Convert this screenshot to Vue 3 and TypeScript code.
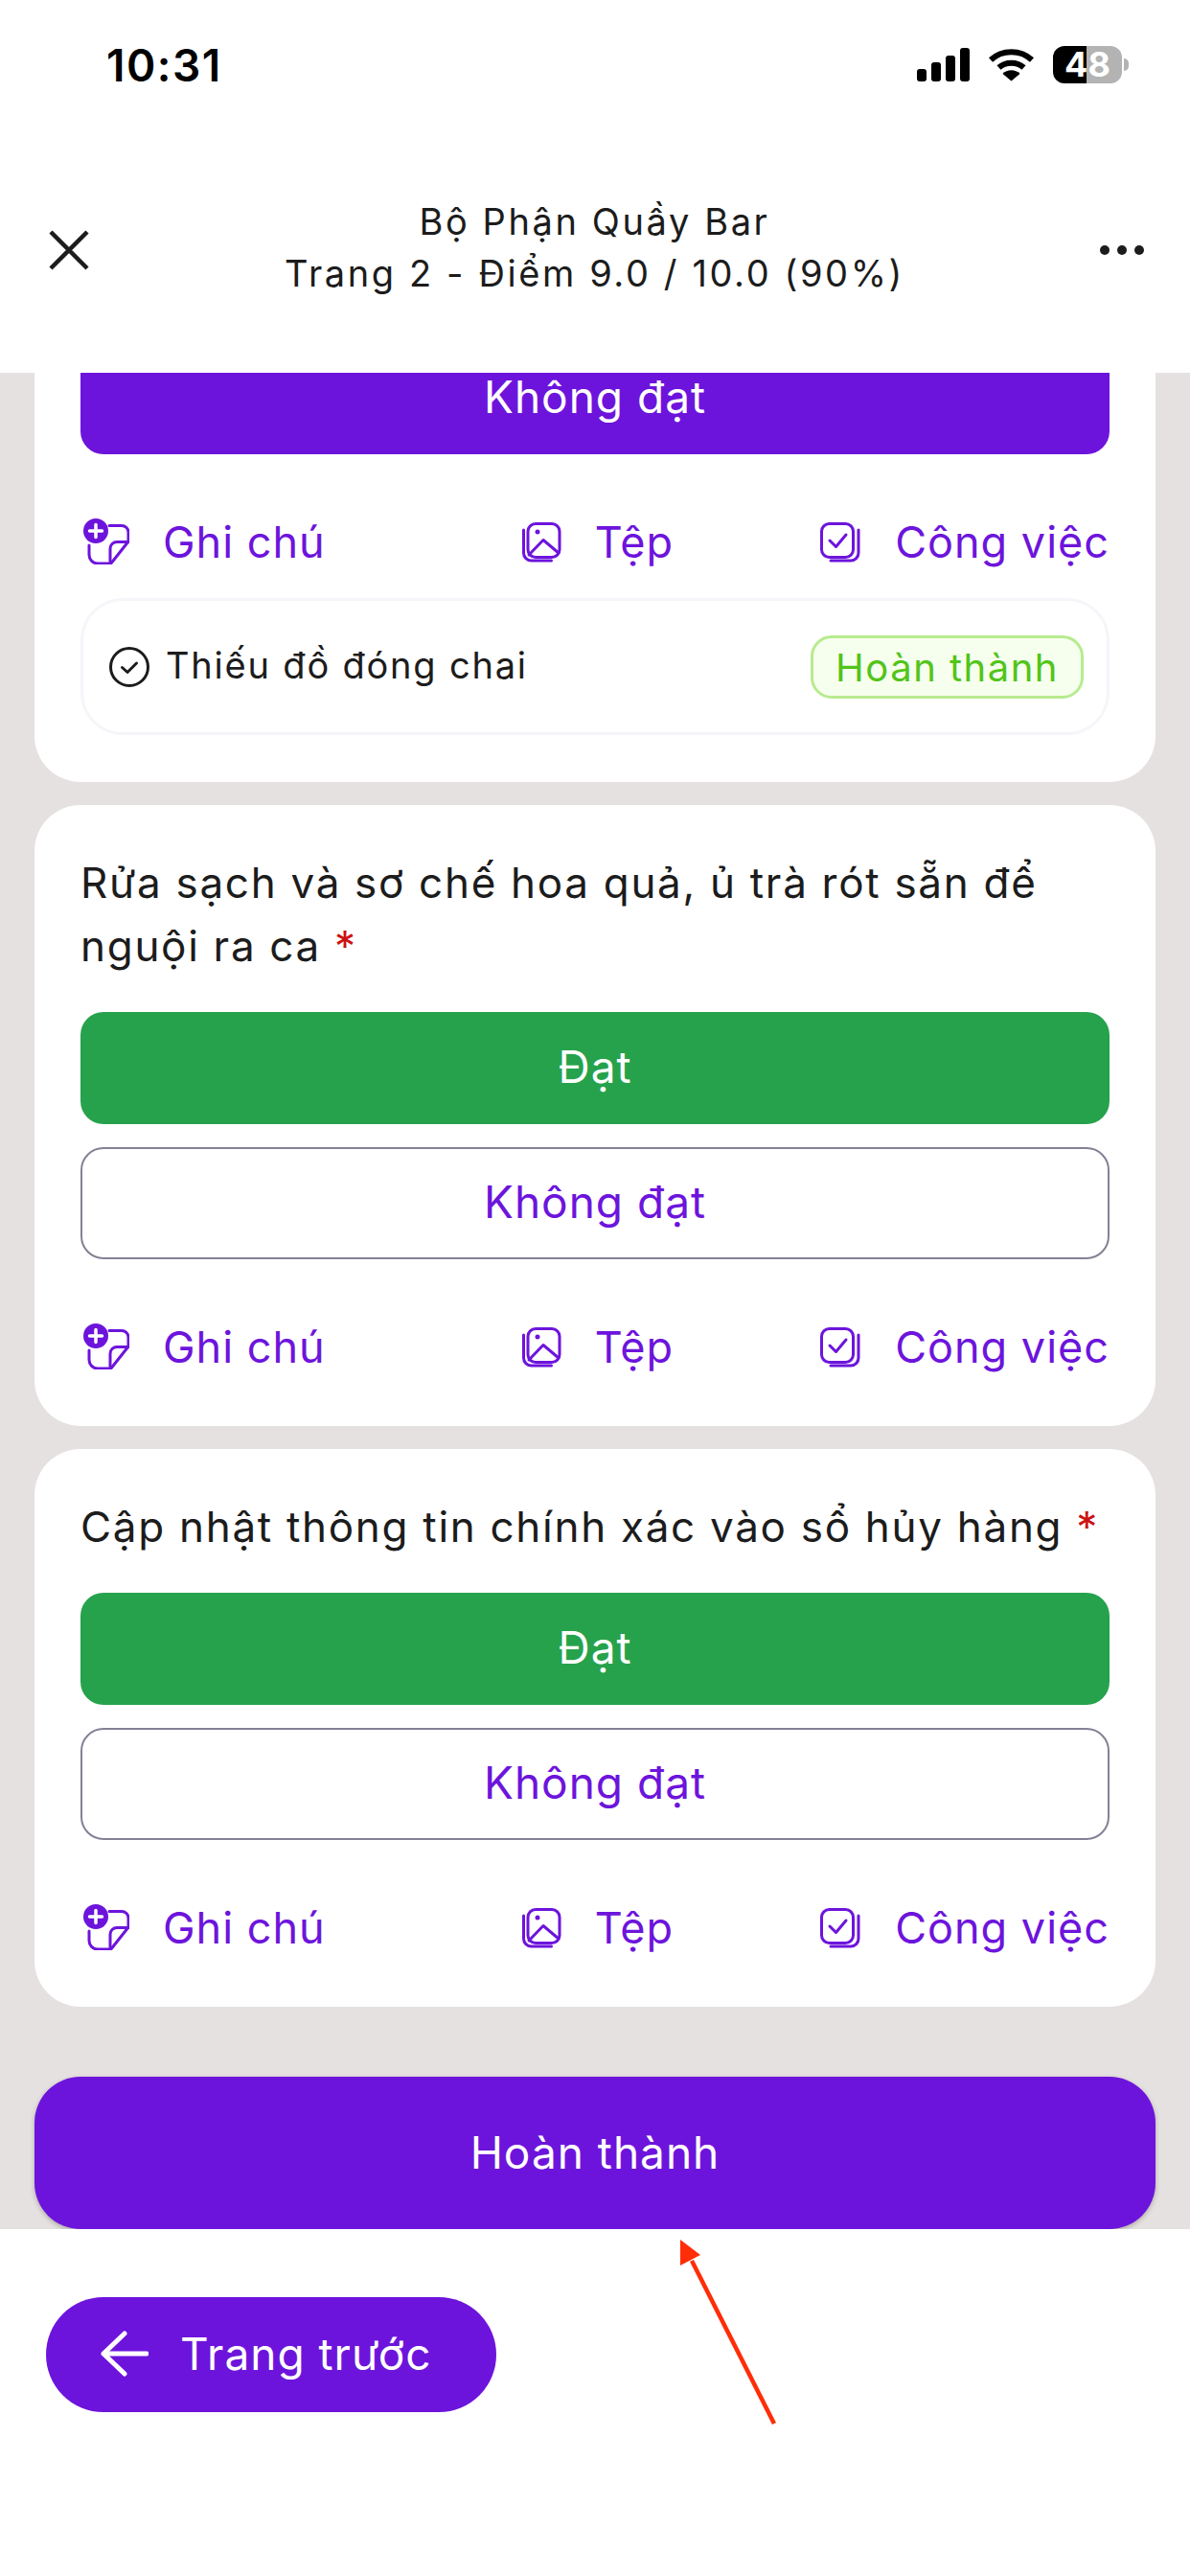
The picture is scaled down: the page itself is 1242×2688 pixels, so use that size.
<script setup lang="ts">
interface ChecklistCard {
  lines: string;
  failed?: boolean;
  task?: { name: string; status: string };
}

const cards: ChecklistCard[] = [
  {
    lines: '',
    failed: true,
    task: { name: 'Thiếu đồ đóng chai', status: 'Hoàn thành' },
  },
  { lines: 'Rửa sạch và sơ chế hoa quả, ủ trà rót sẵn để nguội ra ca' },
  { lines: 'Cập nhật thông tin chính xác vào sổ hủy hàng' },
];
</script>

<template>
  <div class="page">
    <header class="top">
      <div class="status">
        <span class="time">10:31</span>
        <div class="status-icons">
          <svg width="55" height="35" viewBox="0 0 55 35" fill="#000">
            <rect x="0" y="22" width="10" height="13" rx="3" />
            <rect x="15" y="15" width="10" height="20" rx="3" />
            <rect x="30" y="8" width="10" height="27" rx="3" />
            <rect x="45" y="0" width="10" height="35" rx="3" />
          </svg>
          <svg width="47" height="35" viewBox="0 0 47 35" fill="none" stroke="#000" stroke-width="6">
            <path d="M2 12.500C14 1.500 33 1.500 45 12.500" />
            <path d="M10.500 20.500C17.500 14 29.500 14 36.500 20.500" />
            <path d="M23.500 34.500 14.500 27C19 22 28 22 32.500 27Z" fill="#000" stroke="none" />
          </svg>
          <div class="battery">48</div>
        </div>
      </div>
      <div class="nav">
        <svg class="close" width="42" height="42" viewBox="0 0 42 42" fill="none" stroke="#1c1c1c" stroke-width="4.500">
          <path d="M2 2 40 40M40 2 2 40" />
        </svg>
        <div class="nav-title">
          <div>Bộ Phận Quầy Bar</div>
          <div>Trang 2 - Điểm 9.0 / 10.0 (90%)</div>
        </div>
        <div class="dots"><i></i><i></i><i></i></div>
      </div>
    </header>

    <main class="scroll">
      <section v-for="(card, i) in cards" :key="i" class="card" :class="{ 'card-task': card.task }">
        <p v-if="card.lines" class="question">
          {{ card.lines }} <span class="required">*</span>
        </p>
        <div class="answers">
          <template v-if="card.failed">
            <button class="answer answer-no-active">Không đạt</button>
          </template>
          <template v-else>
            <button class="answer answer-yes">Đạt</button>
            <button class="answer answer-no">Không đạt</button>
          </template>
        </div>
        <div class="actions">
          <div class="action action-note">
            <svg width="48" height="48" viewBox="0 0 48 48" fill="none" stroke="#6d14dc" stroke-width="3" stroke-linecap="round" stroke-linejoin="round">
              <path d="M27 7.500H40a7 7 0 0 1 7 7V24L30 45.500a3 3 0 0 1-3 1.500H15a9 9 0 0 1-9-9V28" />
              <path d="M47 24.500H35a7 7 0 0 0-7 7V45" />
              <circle cx="13" cy="13" r="13" fill="#6d14dc" stroke="none" />
              <path d="M13 6.500V19.500M6.500 13H19.500" stroke="#fff" stroke-width="3.500" />
            </svg>
            <span>Ghi chú</span>
          </div>
          <div class="action action-file">
            <svg width="44" height="44" viewBox="0 0 44 44" fill="none" stroke="#6d14dc" stroke-width="3" stroke-linecap="round" stroke-linejoin="round">
              <rect x="9" y="3.500" width="33" height="35" rx="8" />
              <path d="M4.500 10v24a8 8 0 0 0 8 8h21" />
              <path d="M10 36 25 20.500 41 34" />
              <circle cx="19" cy="12" r="2.500" fill="#6d14dc" stroke="none" />
            </svg>
            <span>Tệp</span>
          </div>
          <div class="action">
            <svg width="44" height="44" viewBox="0 0 44 44" fill="none" stroke="#6d14dc" stroke-width="3" stroke-linecap="round" stroke-linejoin="round">
              <rect x="2.500" y="3.500" width="33" height="35" rx="8" />
              <path d="M41 10v24a8 8 0 0 1-8 8H12" />
              <path d="M11 21l6.500 6.500L28 15" />
            </svg>
            <span>Công việc</span>
          </div>
        </div>
        <div v-if="card.task" class="task">
          <div class="task-name">
            <svg width="42" height="42" viewBox="0 0 42 42" fill="none" stroke="#1c1c1c" stroke-width="3">
              <circle cx="21" cy="21" r="19.500" />
              <path d="M13.500 21.500l5.500 5 9.500-9.500" stroke-linecap="round" stroke-linejoin="round" />
            </svg>
            <span>{{ card.task.name }}</span>
          </div>
          <span class="badge">{{ card.task.status }}</span>
        </div>
      </section>
      <button class="finish">Hoàn thành</button>
    </main>

    <footer class="bottom">
      <button class="back">
        <svg width="50" height="48" viewBox="0 0 50 48" fill="none" stroke="#fff" stroke-width="5" stroke-linecap="round" stroke-linejoin="round">
          <path d="M25 3 3 24 25 45M3 24H48" />
        </svg>
        <span>Trang trước</span>
      </button>
    </footer>

    <svg class="annotation" width="110" height="200" viewBox="0 0 110 200">
      <path d="M100 194 14 24" stroke="#ff2d08" stroke-width="4.500" />
      <path d="M2 2 23 18 2 29Z" fill="#ff2d08" />
    </svg>
  </div>
</template>

<style scoped>
.page {
  position: relative;
  display: flex;
  flex-direction: column;
  width: 1242px;
  height: 2688px;
  overflow: hidden;
  background: #fff;
  color: #1c1c1c;
  font-family: Inter, 'Noto Sans', sans-serif;
}

.top {
  flex: none;
  height: 389px;
  background: #fff;
}

.status {
  display: flex;
  justify-content: space-between;
  align-items: flex-start;
  height: 133px;
  padding: 44px 71px 0 111px;
  box-sizing: border-box;
}

.time {
  font-size: 46px;
  font-weight: 600;
  line-height: 48px;
  letter-spacing: 1.500px;
  color: #000;
}

.status-icons {
  display: flex;
  align-items: flex-start;
  gap: 20px;
  padding-top: 6px;
}

.battery {
  position: relative;
  width: 72px;
  height: 39px;
  margin-top: -2px;
  border-radius: 12px;
  background: linear-gradient(90deg, #000 35px, #b3b3b3 35px);
  color: #fff;
  font-size: 36px;
  font-weight: 700;
  line-height: 39px;
  text-align: center;
}

.battery::after {
  content: '';
  position: absolute;
  top: 13px;
  right: -7px;
  width: 5px;
  height: 13px;
  border-radius: 0 6px 6px 0;
  background: #b3b3b3;
}

.nav {
  display: flex;
  justify-content: space-between;
  align-items: center;
  height: 256px;
  padding: 0 48px 0 51px;
  box-sizing: border-box;
}

.nav-title {
  padding-bottom: 6px;
  font-size: 38px;
  line-height: 54px;
  letter-spacing: 2.600px;
  text-align: center;
}

.dots {
  display: flex;
  gap: 8px;
}

.dots i {
  width: 10px;
  height: 10px;
  border-radius: 50%;
  background: #1c1c1c;
}

.scroll {
  flex: none;
  display: flex;
  flex-direction: column;
  justify-content: flex-end;
  gap: 24px;
  height: 1937px;
  padding: 0 36px;
  box-sizing: border-box;
  overflow: hidden;
  background: #e5e1e0;
}

.card {
  flex: none;
  padding: 48px 48px 53px;
  border-radius: 48px;
  background: #fff;
}

.card-task {
  padding-bottom: 49px;
}

.question {
  margin: 0 0 36px;
  font-size: 44px;
  line-height: 66px;
  letter-spacing: 1.700px;
}

.required {
  color: #cc1111;
}

.answers {
  display: flex;
  flex-direction: column;
  gap: 24px;
}

.answer {
  height: 117px;
  padding: 0 0 4px;
  border: none;
  border-radius: 24px;
  font-family: inherit;
  font-size: 46px;
  letter-spacing: 1px;
}

.answer-yes {
  background: #26a24c;
  color: #fff;
}

.answer-no {
  border: 2px solid #858095;
  background: #fff;
  color: #6d14dc;
}

.answer-no-active {
  background: #6d14dc;
  color: #fff;
}

.actions {
  display: grid;
  grid-template-columns: 1fr auto 1fr;
  align-items: center;
  height: 60px;
  margin-top: 61px;
  color: #6d14dc;
  font-size: 45px;
  letter-spacing: 1px;
}

.action {
  display: flex;
  align-items: center;
  gap: 35px;
}

.action:last-child {
  justify-self: end;
}

.action-note {
  padding-left: 3px;
}

.action-file {
  padding-left: 3px;
}

.task {
  display: flex;
  justify-content: space-between;
  align-items: center;
  height: 143px;
  margin-top: 29px;
  padding: 0 24px 0 27px;
  box-sizing: border-box;
  border: 3px solid #f5f5fa;
  border-radius: 44px;
}

.task-name {
  display: flex;
  align-items: center;
  gap: 17px;
  font-size: 38px;
  letter-spacing: 1.800px;
}

.task-name span {
  padding-bottom: 4px;
}

.badge {
  padding: 1px 23px 0;
  border: 3px solid #b7eb8f;
  border-radius: 22px;
  background: #f6ffed;
  color: #52c41a;
  font-size: 40px;
  line-height: 59px;
  letter-spacing: 1.500px;
}

.finish {
  flex: none;
  height: 159px;
  margin-top: 49px;
  padding: 0 0 2px;
  border: none;
  border-radius: 48px;
  background: #6d14dc;
  box-shadow: 0 2px 5px rgba(0, 0, 0, 0.25);
  color: #fff;
  font-family: inherit;
  font-size: 46px;
  letter-spacing: 1px;
}

.bottom {
  flex: 1;
  padding: 71px 48px 0;
}

.back {
  display: flex;
  align-items: center;
  gap: 33px;
  width: 470px;
  height: 120px;
  padding: 0 0 2px 57px;
  box-sizing: border-box;
  border: none;
  border-radius: 60px;
  background: #6d14dc;
  color: #fff;
  font-family: inherit;
  font-size: 46px;
  letter-spacing: 1px;
}

.annotation {
  position: absolute;
  left: 708px;
  top: 2335px;
}
</style>
